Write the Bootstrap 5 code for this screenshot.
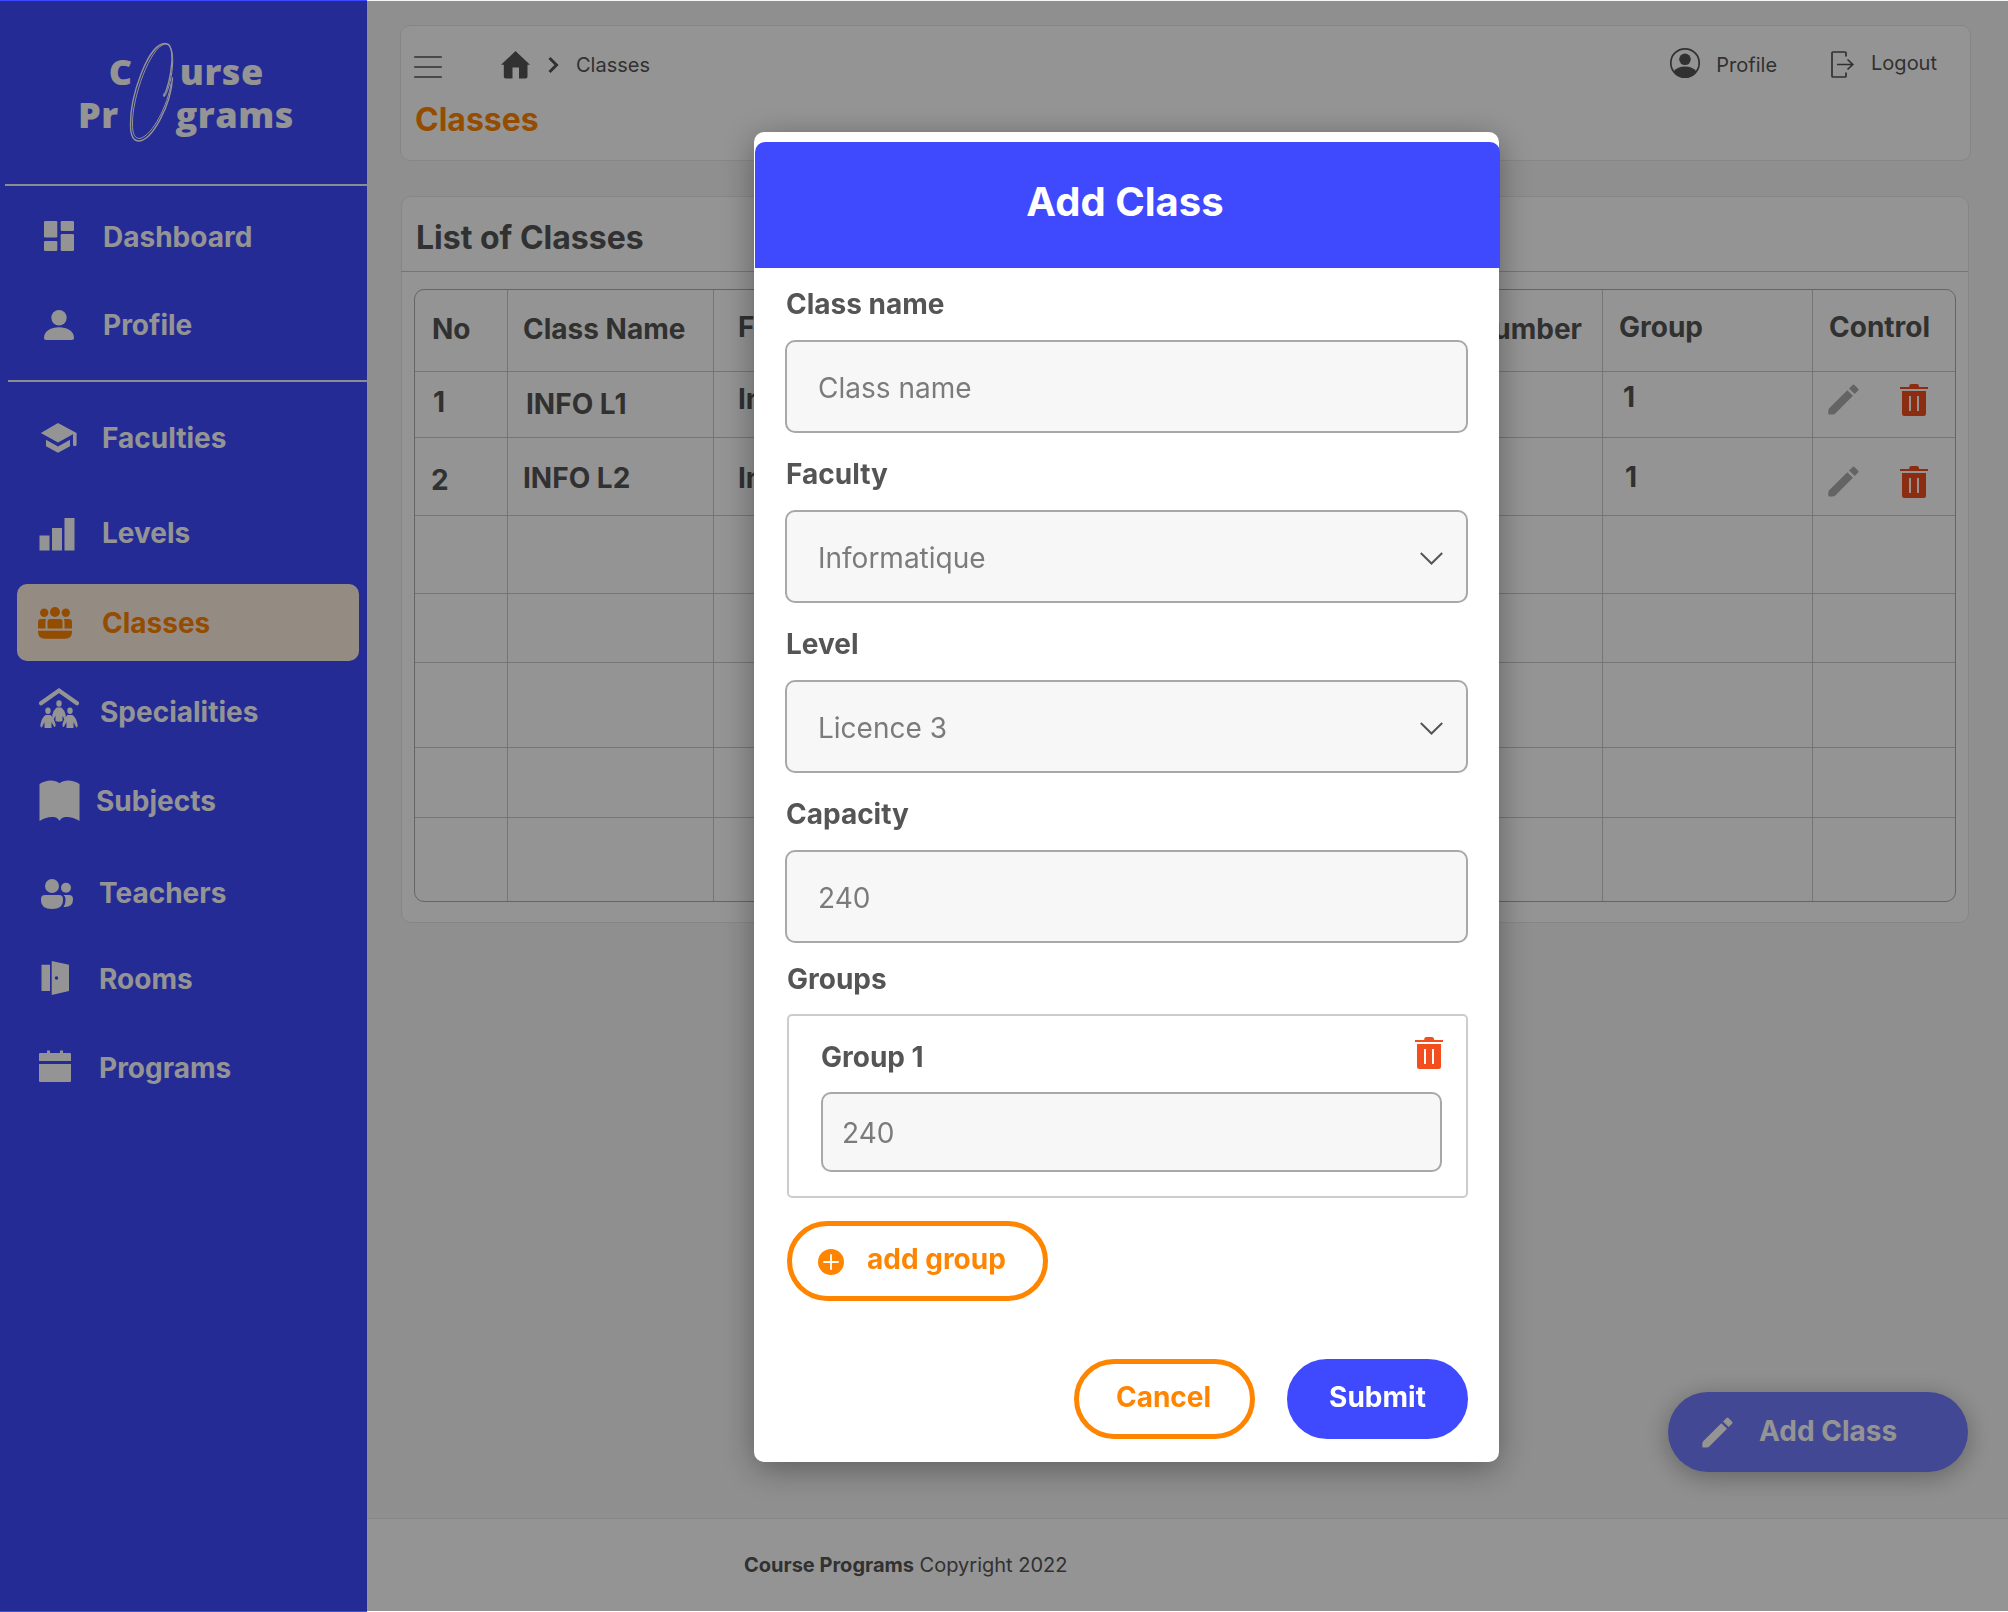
<!DOCTYPE html>
<html lang="en">
<head>
<meta charset="utf-8">
<meta name="viewport" content="width=device-width, initial-scale=1">
<title>Course Programs - Classes</title>
<link href="https://cdn.jsdelivr.net/npm/bootstrap@5.3.0/dist/css/bootstrap.min.css" rel="stylesheet">
<style>
  :root { --brand: #3f4aff; --accent: #ff8500; --ink: #555; --danger: #f24e1e; }
  body { font-family: Inter, "Liberation Sans", sans-serif; background: #f7f7f7; color: var(--ink); height: 1612px; overflow: hidden; font-size: 20px; line-height: 24px; }
  svg { flex: none; display: block; overflow: visible; }
  .t28 { font-size: 28px; line-height: 34px; font-weight: 700; }

  .side { width: 367px; height: 1612px; background: var(--brand); color: #fff; flex: none; }
  .brand-box { height: 184px; }
  .brand-box text { font-family: "Open Sans", sans-serif; font-weight: 800; font-size: 36px; letter-spacing: .5px; fill: #fff; }
  .rule { height: 2px; background: #f0f4f4; margin-left: 5px; }
  .rule-2 { margin: 17px 0 0 8px; }
  .side .nav-link { height: 77px; margin: 0 8px 0 17px; padding: 0 0 0 19px; border-radius: 10px; color: #fff; font-size: 28px; line-height: 34px; font-weight: 700; }
  .side .nav-link svg { width: 45px; height: 45px; fill: currentColor; margin-right: 21px; }
  .side .nav-link.active { background: #fff0e2; color: var(--accent); }
  .g12 { margin-top: 12px !important; } .g11 { margin-top: 11px !important; } .g13 { margin-top: 13px !important; }
  .g15 { margin-top: 15px !important; } .g17 { margin-top: 17px !important; } .g18 { margin-top: 18px !important; } .g9 { margin-top: 9px !important; }
  .side .ic-22 svg { margin-right: 22px; } .side .ic-19 svg { margin-right: 19px; }
  .side .ic-15 svg { margin-right: 15px; } .side .ic-18 svg { margin-right: 18px; }

  .content-col { height: 1612px; }
  .panel { background: #fff; border: 1px solid #e7e7e7; border-radius: 10px; }
  .top-panel { margin: 25px 37px 0 33px; height: 136px; padding: 2px 33px 0 13px; }
  .top-row { height: 73px; }
  .page-title { font-size: 32px; line-height: 38px; font-weight: 700; color: var(--accent); margin: 0 0 0 1px; }
  .crumb-home { margin-left: 59px; } .crumb-sep { margin-left: 18px; } .crumb-text { margin-left: 17px; }
  .who { margin-left: 16px; } .out-icon { margin-left: 54px; } .out-text { margin: 0 0 4px 17px; }
  .list-panel { margin: 35px 39px 0 34px; height: 727px; }
  .list-head { height: 75px; padding: 22px 0 0 14px; border-bottom: 1px solid #cacaca; margin-left: -1px; }
  .list-head h2 { font-size: 32px; line-height: 38px; font-weight: 700; margin: 0 0 0 1px; }
  .grid-wrap { margin: 17px 12px 0 12px; border: 1px solid #adadad; border-radius: 10px; height: 613px; }
  .grid-wrap table { table-layout: fixed; border-collapse: separate; border-spacing: 0; margin: 0; --bs-table-bg: transparent; height: 611px; }
  .grid-wrap th, .grid-wrap td { padding: 0 0 0 16px; border: 0 solid #cacaca; border-width: 0 1px 1px 0; vertical-align: top; color: var(--ink); font-size: 28px; line-height: 34px; font-weight: 700; white-space: nowrap; overflow: visible; }
  .grid-wrap tr > :last-child { border-right: 0; padding-left: 15px; }
  .grid-wrap tr:last-child > * { border-bottom: 0; }
  .grid-wrap tr > .noline { border-right-color: transparent; }
  .grid-wrap tr > .in1 { padding-left: 17px; } .grid-wrap tr > .in2 { padding-left: 15px; } .grid-wrap tr > .in3 { padding-left: 24px; }
  .grid-wrap tr > .in4 { padding-left: 18px; } .grid-wrap tr > .in5 { padding-left: 20px; } .grid-wrap tr > .in6 { padding-left: 22px; }
  .r-head { height: 82px; } .r-1 { height: 66px; } .r-2 { height: 78px; }
  .r-3 { height: 78px; } .r-4 { height: 69px; } .r-5 { height: 85px; } .r-6 { height: 70px; } .r-7 { height: 83px; }
  .r-head > * { padding-top: 20px !important; } .r-head > .low { padding-top: 22px !important; }
  .grid-wrap .r-head > :last-child { padding-left: 16px; }
  .grid-wrap .num { text-align: right; padding-right: 20px; }
  .r-1 > * { padding-top: 10px !important; } .r-1 > .c-no { padding-top: 13px !important; } .r-1 > .c-name { padding-top: 15px !important; } .r-1 > .c-grp { padding-top: 8px !important; }
  .r-2 > * { padding-top: 23px !important; } .r-2 > .c-no { padding-top: 25px !important; } .r-2 > .c-grp { padding-top: 22px !important; }
  .r-1 > .c-ctl { padding-top: 12px !important; } .r-2 > .c-ctl { padding-top: 28px !important; }
  .ctl { gap: 41px; }
  .c-ctl svg.pen { fill: #adadad; } .bin { fill: var(--danger); }

  .fab { width: 300px; height: 80px; border-radius: 40px; background: #747cff; color: #fff; margin: 469px 40px 0 auto; padding: 0 0 0 34px; border: 0; box-shadow: 0 5px 26px rgba(0,0,0,.3); }
  .fab span { margin: 0 0 2px 26px; }
  .foot { background: #fff; border-top: 1px solid #e8e8e8; height: 94px; padding: 34px 0 0 377px; }

  .modal-backdrop { top: 1px; height: 1610px; --bs-backdrop-opacity: .42; }
  .modal { overflow: hidden; }
  .modal-dialog { width: 745px; max-width: none; margin: 132px 0 0 754px; }
  .modal-content { height: 1330px; border: 0; border-radius: 10px; padding-top: 10px; color: var(--ink); box-shadow: 0 7px 34px rgba(0,0,0,.36); }
  .modal-header { height: 126px; margin: 0 -1px 0 1px; background: var(--brand); border: 0; border-radius: 10px 10px 0 0; padding: 0 5px 7px 0; }
  .modal-title { font-size: 40px; line-height: 48px; font-weight: 700; color: #fff; }
  .modal-body { padding: 19px 31px 0 31px; }
  .modal-body label { display: block; margin: 0 0 19px 1px; }
  .fld { height: 93px; border: 2px solid #a8a8a8; border-radius: 10px; background: #f7f7f7; color: #7b7b7b; font-size: 28px; line-height: 34px; padding: 3px 23px 0 31px; margin-bottom: 24px; }
  .grp-title { margin: 19px 0 18px 2px; }
  .grp-box { margin-left: 2px; height: 184px; border: 2px solid #ccc; border-radius: 5px; padding: 21px 24px 0 32px; }
  .grp-head { height: 34px; }
  .grp-name { margin-top: 3px; }
  .grp-box .fld { height: 80px; margin: 21px 0 0; padding: 2px 19px 0; }
  .bin-box { margin-right: -1px; }
  .pill { height: 80px; border-radius: 40px; border: 5px solid var(--accent); color: var(--accent); padding: 0; }
  .pill-add { width: 261px; margin: 23px 0 0 2px; padding-left: 26px; }
  .pill-add svg { margin-top: 2px; } .pill-add span { margin: 0 0 4px 23px; }
  .acts { gap: 32px; margin-top: 58px; }
  .acts .pill { width: 181px; padding-bottom: 4px; }
  .acts .pill:first-child { padding-right: 2px; }
  .acts .solid { background: var(--brand); border-color: var(--brand); color: #fff; }
</style>
<script src="https://cdn.jsdelivr.net/npm/bootstrap@5.3.0/dist/js/bootstrap.bundle.min.js"></script>
</head>
<body>
<svg width="0" height="0" class="position-absolute" aria-hidden="true">
  <symbol id="trash" viewBox="0 0 28 32">
    <path d="M0 3h9.2v-.8A2.2 2.2 0 0 1 11.400 0h5.400A2.200 2.200 0 0 1 19 2.200V3h9v2H0zM2 7h24v22.500a2.500 2.500 0 0 1-2.500 2.500h-19A2.500 2.500 0 0 1 2 29.500zM9 12v15h2V12zM17 12v15h2V12z" fill-rule="evenodd"/>
  </symbol>
  <symbol id="pencil" viewBox="0 0 31 31">
    <path d="M19.300 6.200 25 11.800 7.300 29.400Q6.200 30.500 4.600 30.500H1.200Q.3 30.500.3 29.600V26.500Q.3 25 1.400 24zM21 4.500 24.600 1Q25.500.2 26.400 1L30.200 4.800Q31 5.700 30.200 6.600L26.700 10.100z"/>
  </symbol>
</svg>

<div class="d-flex">
  <aside class="side">
    <div class="brand-box">
      <svg width="367" height="184" viewBox="0 0 367 184">
        <text x="108.800" y="85">C</text>
        <text x="179.800" y="85">urse</text>
        <text x="78" y="128">Pr</text>
        <text x="175.500" y="128">grams</text>
        <g fill="none" stroke="#fff" stroke-linecap="round">
          <path stroke-width="1.400" d="M164 96C171 80 177 43.500 165.500 43.500C148 43 130 97 130.500 125C130.500 137 134 141 139 141C152 140 171 106 172.500 78"/>
          <path stroke-width="1" d="M163.500 94C164 99 165.500 96 168 89C173.500 73 176 44 165 44C150 47 132 98 132.500 124C132.500 135 135 138.500 140 138.500C153 135 168 104 171 84"/>
        </g>
      </svg>
    </div>
    <div class="rule"></div>
    <nav class="nav flex-column flex-nowrap">
      <a class="nav-link d-flex align-items-center ic-22 g12" href="#">
        <svg viewBox="0 0 45 45"><rect x="8" y="7" width="13.300" height="16.500" rx="1.200"/><rect x="24.700" y="7" width="13.300" height="10" rx="1.200"/><rect x="8" y="27" width="13.300" height="10" rx="1.200"/><rect x="24.700" y="20" width="13.300" height="17" rx="1.200"/></svg>Dashboard</a>
      <a class="nav-link d-flex align-items-center ic-22 g11" href="#">
        <svg viewBox="0 0 45 45"><circle cx="23" cy="15.700" r="7.700"/><path d="M8 35.800C8 29 15 25.200 23 25.200s15 3.800 15 10.600c0 1.500-.8 2.200-2.200 2.200H10.200C8.800 38 8 37.300 8 35.800z"/></svg>Profile</a>
      <div class="rule rule-2"></div>
      <a class="nav-link d-flex align-items-center g17" href="#">
        <svg viewBox="0 0 45 45"><path d="M22 8 4.800 18 22 27.600 37 19.300V29.500a1.800 1.800 0 0 0 3.600 0V18zM10 24.800v6.400l12 6.500 12-6.500v-6.400l-12 6.700z"/></svg>Faculties</a>
      <a class="nav-link d-flex align-items-center g18" href="#">
        <svg viewBox="0 0 45 45"><path d="M3.500 25.500h10v15h-10zM16 18h10v22.500H16zM28.500 8h10v32.500h-10z"/></svg>Levels</a>
      <a class="nav-link active d-flex align-items-center g13" href="#">
        <svg viewBox="0 0 45 45"><circle cx="8.200" cy="12.700" r="4.200"/><circle cx="19" cy="12" r="5"/><circle cx="29.800" cy="12.700" r="4.200"/><path d="M5 19h5.300q-.8 1-.8 2.500v7H2V22q0-3 3-3zM14 19h10q2.500 0 2.500 2.500v7h-15v-7Q11.500 19 14 19zM27.700 19H33q3 0 3 3v6.500h-7.500v-7q0-1.500-.8-2.500zM2 30.700h34v1q0 7-7 7H9q-7 0-7-7z"/></svg>Classes</a>
      <a class="nav-link d-flex align-items-center ic-19 g12" href="#">
        <svg viewBox="0 0 45 45"><path d="M5 14.200 23 1.600 41 14.200" fill="none" stroke="currentColor" stroke-width="4.200" stroke-linecap="round"/><ellipse cx="23" cy="14.500" rx="2.700" ry="3.200"/><ellipse cx="12" cy="21.700" rx="2.700" ry="3.200"/><ellipse cx="34" cy="21.700" rx="2.700" ry="3.200"/>
          <path d="M20.500 18.500h5Q28.500 21 29.700 26q.5 4-1.300 4.500L26.500 26.500V32q-3.500 1.500-7 0v-5.500l-1.900 4Q15.800 30 16.300 26 17.500 21 20.500 18.500z"/>
          <path d="M9.500 26h5q3 2.500 5 9 .5 3-1.300 3L15.500 33v6h-7v-6l-2.700 5.500Q4 38.500 4.500 35 6 28.500 9.500 26z"/><path d="M31.500 26h5q3.500 2.500 5 9 .5 3.500-1.300 3.500L37.500 33v6h-7v-6l-2.700 5Q26 38 26.500 35q2-6.500 5-9z"/></svg>Specialities</a>
      <a class="nav-link d-flex align-items-center ic-15 g12" href="#">
        <svg viewBox="0 0 45 45"><path d="M3.500 6C9.500 2 18 .8 23.500 5.200 29 .8 37.500 2 43.500 6v37C37 39 29.500 37.800 25.500 40.500L23.500 42.700 21.500 40.500C17.500 37.800 10 39 3.500 43z"/></svg>Subjects</a>
      <a class="nav-link d-flex align-items-center ic-18 g15" href="#">
        <svg viewBox="0 0 45 45"><circle cx="16" cy="16" r="7"/><circle cx="30" cy="17.800" r="5"/><path d="M9 25h14q4 0 4 4v1.500Q27 39 16 39T5 30.500V29q0-4 4-4zM27.500 25H33q4 0 4 4v.5Q37 37.500 27.500 37 29.500 34 29.500 30.500V29Q29.500 26.500 27.500 25z"/></svg>Teachers</a>
      <a class="nav-link d-flex align-items-center ic-18 g9" href="#">
        <svg viewBox="0 0 45 45"><path d="M5.500 8.700H14V35H5.500zM15.700 5 33 8.700V35L15.700 39zM20.500 20.300a1.700 1.700 0 1 0 .01 0z" fill-rule="evenodd"/></svg>Rooms</a>
      <a class="nav-link d-flex align-items-center ic-18 g12" href="#">
        <svg viewBox="0 0 45 45"><path d="M4 8h7V5.500h3V8h10V5.500h3V8h7q1 0 1 1v7H3V9q0-1 1-1zM3 19h32v17q0 1-1 1H4q-1 0-1-1z"/></svg>Programs</a>
    </nav>
  </aside>

  <main class="content-col flex-grow-1 d-flex flex-column">
    <header class="panel top-panel">
      <div class="top-row d-flex align-items-center">
        <svg width="28" height="22" viewBox="0 0 28 22" class="mt-1"><path d="M.7 1h26.600M.7 11h26.600M.7 21h26.600" stroke="#555" stroke-width="1.500" stroke-linecap="round"/></svg>
        <svg class="crumb-home" width="29" height="28" viewBox="0 0 29 28"><path fill="#555" d="M14.500 0 29 13.800H26.500V25.500Q26.500 27.500 24.500 27.500H18V16.500H11.500V27.500H4.800Q2.800 27.500 2.800 25.500V13.800H0z"/></svg>
        <svg class="crumb-sep" width="11" height="16" viewBox="0 0 11 16"><path d="M1.500 1 8.500 8 1.500 15" fill="none" stroke="#555" stroke-width="3"/></svg>
        <span class="crumb-text">Classes</span>
        <svg class="ms-auto mb-1" width="30" height="30" viewBox="0 0 30 30"><circle cx="15" cy="15" r="14.200" fill="none" stroke="#555" stroke-width="1.700"/><circle cx="15" cy="11.300" r="5.800" fill="#555"/><path fill="#555" d="M3.500 23.500Q7.500 18.500 15 18.500T26.500 23.500Q22 30 15 30T3.500 23.500z"/></svg>
        <span class="who">Profile</span>
        <svg class="out-icon" width="23" height="27" viewBox="0 0 23 27"><path d="M15 5.500V2Q15 1 14 1H2Q1 1 1 2V25Q1 26 2 26H14Q15 26 15 25V21.500M6 13.500H21.500M16.500 8.500 21.800 13.500 16.500 18.500" fill="none" stroke="#555" stroke-width="1.700"/></svg>
        <span class="out-text">Logout</span>
      </div>
      <h1 class="page-title">Classes</h1>
    </header>

    <section class="panel list-panel">
      <div class="list-head"><h2>List of Classes</h2></div>
      <div class="grid-wrap">
        <table class="table">
          <colgroup><col width="93"><col width="206"><col width="300"><col width="288"><col width="301"><col width="210"><col></colgroup>
          <tr class="r-head"><th class="in1 low">No</th><th class="in2 low">Class Name</th><th class="in3 noline">Faculty</th><th class="noline"></th><th class="num low">Number</th><th>Group</th><th>Control</th></tr>
          <tr class="r-1"><td class="in4 c-no">1</td><td class="in4 c-name">INFO L1</td><td class="in3 noline">Info</td><td class="noline"></td><td></td><td class="in5 c-grp">1</td>
            <td class="c-ctl"><div class="ctl d-flex"><svg class="pen" width="31" height="31"><use href="#pencil"/></svg><svg class="bin" width="28" height="32"><use href="#trash"/></svg></div></td></tr>
          <tr class="r-2"><td class="c-no">2</td><td class="in2 c-name">INFO L2</td><td class="in3 noline">Info</td><td class="noline"></td><td></td><td class="in6 c-grp">1</td>
            <td class="c-ctl"><div class="ctl d-flex"><svg class="pen" width="31" height="31"><use href="#pencil"/></svg><svg class="bin" width="28" height="32"><use href="#trash"/></svg></div></td></tr>
          <tr class="r-3"><td></td><td></td><td class="noline"></td><td class="noline"></td><td></td><td></td><td></td></tr>
          <tr class="r-4"><td></td><td></td><td class="noline"></td><td class="noline"></td><td></td><td></td><td></td></tr>
          <tr class="r-5"><td></td><td></td><td class="noline"></td><td class="noline"></td><td></td><td></td><td></td></tr>
          <tr class="r-6"><td></td><td></td><td class="noline"></td><td class="noline"></td><td></td><td></td><td></td></tr>
          <tr class="r-7"><td></td><td></td><td class="noline"></td><td class="noline"></td><td></td><td></td><td></td></tr>
        </table>
      </div>
    </section>

    <button class="fab btn d-flex align-items-center flex-shrink-0 t28" type="button">
      <svg width="31" height="31" fill="#fff"><use href="#pencil"/></svg><span>Add Class</span>
    </button>
    <footer class="foot mt-auto flex-shrink-0"><b>Course Programs</b> Copyright 2022</footer>
  </main>
</div>

<div class="modal-backdrop show"></div>
<div class="modal d-block" tabindex="-1" role="dialog" aria-labelledby="dlgTitle">
  <div class="modal-dialog">
    <div class="modal-content">
      <div class="modal-header justify-content-center"><h2 class="modal-title" id="dlgTitle">Add Class</h2></div>
      <div class="modal-body">
        <label class="t28">Class name</label>
        <div class="fld d-flex align-items-center">Class name</div>
        <label class="t28">Faculty</label>
        <div class="fld d-flex align-items-center justify-content-between">Informatique
          <svg width="23" height="13" viewBox="0 0 23 13"><path d="M.8 1 11.500 11.500 22.200 1" fill="none" stroke="#555" stroke-width="2"/></svg></div>
        <label class="t28">Level</label>
        <div class="fld d-flex align-items-center justify-content-between">Licence 3
          <svg width="23" height="13" viewBox="0 0 23 13"><path d="M.8 1 11.500 11.500 22.200 1" fill="none" stroke="#555" stroke-width="2"/></svg></div>
        <label class="t28">Capacity</label>
        <div class="fld mb-0 d-flex align-items-center">240</div>
        <div class="t28 grp-title">Groups</div>
        <div class="grp-box">
          <div class="grp-head d-flex align-items-start justify-content-between t28"><span class="grp-name">Group 1</span>
            <svg class="bin bin-box" width="28" height="32"><use href="#trash"/></svg></div>
          <div class="fld d-flex align-items-center">240</div>
        </div>
        <button type="button" class="btn pill pill-add t28 d-flex align-items-center">
          <svg width="26" height="26" viewBox="0 0 26 26"><circle cx="13" cy="13" r="13" fill="#ff8500"/><path d="M13 6v14M6 13h14" stroke="#fff" stroke-width="1.800" stroke-linecap="round"/></svg><span>add group</span></button>
        <div class="acts d-flex justify-content-end">
          <button type="button" class="btn pill t28">Cancel</button>
          <button type="button" class="btn pill solid t28">Submit</button>
        </div>
      </div>
    </div>
  </div>
</div>
</body>
</html>
